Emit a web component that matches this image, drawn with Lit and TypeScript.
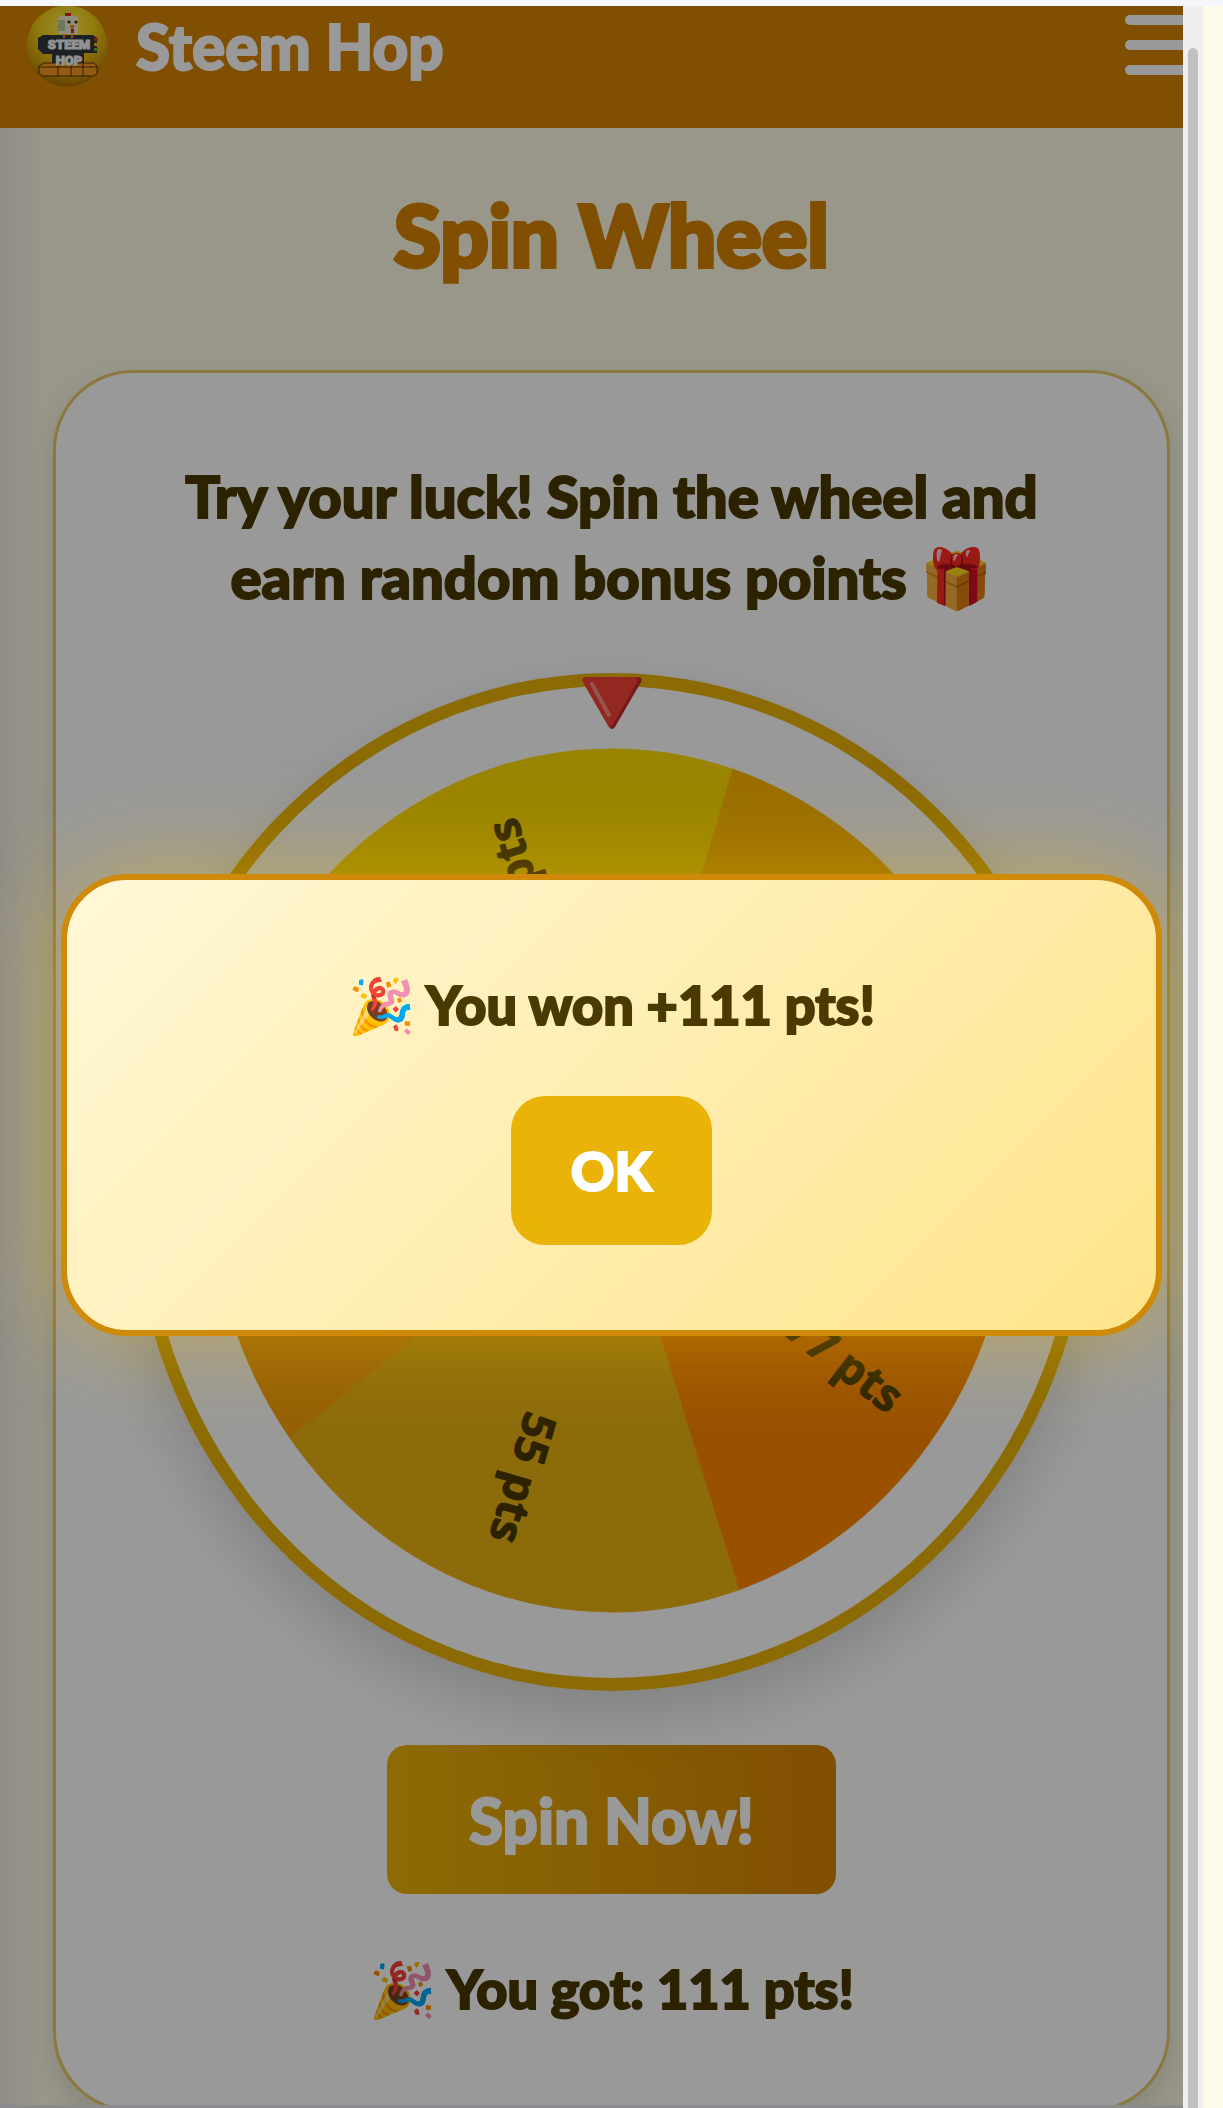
import { LitElement, html, svg, css } from "lit";
import { customElement, property, state } from "lit/decorators.js";

interface Slice {
  color: string;
  label: string;
}

@customElement("hop-logo")
export class HopLogo extends LitElement {
  static styles = css`
    :host {
      display: block;
      width: 82px;
      height: 82px;
    }
    .logo {
      display: block;
      width: 100%;
      height: 100%;
    }
    .word {
      font-family: "Roboto", "Liberation Sans", sans-serif;
      font-weight: 900;
      font-size: 13px;
      fill: #f4f4f4;
      stroke: #f4f4f4;
      stroke-width: 1px;
      text-anchor: middle;
    }
  `;

  render() {
    return html`
      <svg class="logo" viewBox="0 0 82 82" role="img" aria-label="Steem Hop logo">
        <defs>
          <radialGradient id="ball" cx="50%" cy="28%" r="72%">
            <stop offset="0" stop-color="#ffee58" />
            <stop offset="0.45" stop-color="#f2cf18" />
            <stop offset="0.8" stop-color="#cf9a0a" />
            <stop offset="1" stop-color="#a86c04" />
          </radialGradient>
        </defs>
        <circle cx="41" cy="41" r="40.5" fill="url(#ball)" />
        <path d="M12 33l5-3h50l4 3v15H58v15H26V49H17l-5-5z" fill="#33383c" />
        <path d="M68 33h4v3h-4z" fill="#d33a20" />
        <path d="M68 38h4v3h-4z" fill="#e8c31c" />
        <path d="M68 43h4v3h-4z" fill="#5fae3a" />
        <path d="M39 8h6v5h-6z" fill="#d9271c" />
        <path d="M32 13l3-2h15l2 2v16H34l-2-2z" fill="#f3ead2" />
        <path d="M32 15h7v11h-7z" fill="#b9c79a" />
        <circle cx="43" cy="17" r="1.6" fill="#2b2b22" />
        <circle cx="50" cy="17" r="1.6" fill="#2b2b22" />
        <path d="M44 20h5l-2 4h-2z" fill="#f08a1c" />
        <path d="M45 24h3v4h-3z" fill="#d9271c" />
        <path d="M38 29v4M46 29v4" stroke="#e88a18" stroke-width="2" />
        <path d="M13 61l5-3h50l3 3v8l-4 2H17l-4-3z" fill="#f39a1e" stroke="#5e2e06" />
        <path d="M13 62h58M32 58v13M45 58v13M57 58v13" stroke="#5e2e06" stroke-width="1" />
        <text class="word" x="43" y="44">STEEM</text>
        <text class="word" x="43" y="60">HOP</text>
      </svg>
    `;
  }
}

@customElement("prize-wheel")
export class PrizeWheel extends LitElement {
  @property({ attribute: false }) slices: Slice[] = [];
  @property({ type: Number }) turn = 0;

  static styles = css`
    :host {
      display: block;
      position: relative;
    }
    .ring {
      box-sizing: border-box;
      border: 13px solid #eab308;
      border-radius: 50%;
      box-shadow: 0 26px 60px rgba(0, 0, 0, 0.15);
    }
    .face {
      display: block;
      width: 100%;
      height: auto;
    }
    .label {
      font-family: "Open Sans", "Noto Sans", sans-serif;
      font-weight: 700;
      font-size: 45px;
      fill: #4b3a00;
      stroke: #4b3a00;
      stroke-width: 1px;
      stroke-linejoin: round;
      text-anchor: end;
      dominant-baseline: central;
    }
    .pointer {
      position: absolute;
      top: 4px;
      left: 50%;
      width: 60px;
      height: 53px;
      margin-left: -30px;
    }
  `;

  private point(deg: number, k = 1) {
    const a = (deg * Math.PI) / 180;
    return { x: 466 + 400 * k * Math.cos(a), y: 494 + 431 * k * Math.sin(a) };
  }

  private slice(s: Slice, i: number) {
    const step = 360 / this.slices.length;
    const from = this.turn + i * step;
    const a = this.point(from);
    const b = this.point(from + step);
    return svg`<path
      d="M466 494L${a.x} ${a.y}A400 431 0 0 1 ${b.x} ${b.y}Z"
      fill=${s.color} stroke=${s.color} stroke-width="1"></path>`;
  }

  private label(s: Slice, i: number) {
    const step = 360 / this.slices.length;
    const end = this.point(this.turn + (i + 0.5) * step, 0.88);
    const angle = (Math.atan2(end.y - 494, end.x - 466) * 180) / Math.PI;
    return svg`<text class="label" transform="translate(${end.x} ${end.y}) rotate(${angle})">${s.label}</text>`;
  }

  render() {
    return html`
      <div class="ring">
        <svg class="face" viewBox="0 0 932 991" role="img" aria-label="Prize wheel">
          ${this.slices.map((s, i) => this.slice(s, i))}
          ${this.slices.filter((s) => s.label).map((s) => this.label(s, this.slices.indexOf(s)))}
        </svg>
      </div>
      <svg class="pointer" viewBox="0 0 60 53" aria-hidden="true">
        <path d="M4 0H56Q61 1 59 5L33 50Q30 54 27 50L1 5Q-1 1 4 0Z" fill="#c62828" />
        <path d="M4 0H54L56 4L30 49L27 50L1 5Q-1 1 4 0Z" fill="#f44336" />
        <path d="M10 7L27 38" stroke="#ff8a80" stroke-width="4" stroke-linecap="round" />
      </svg>
    `;
  }
}

@customElement("app-root")
export class AppRoot extends LitElement {
  @state() private points = 111;
  @state() private open = true;

  private slices: Slice[] = [
    { color: "#ffb700", label: "" },
    { color: "#ff8800", label: "77 pts" },
    { color: "#eab313", label: "55 pts" },
    { color: "#f9a00a", label: "" },
    { color: "#ffdc00", label: "111 pts" },
  ];

  static styles = css`
    :host {
      display: block;
      position: relative;
      height: 100vh;
      overflow: hidden;
      box-sizing: border-box;
      padding: 6px 0 3px;
      background: #f5f5fc;
      font-family: "Lato", "Noto Sans", "Noto Color Emoji", sans-serif;
      font-weight: 900;
      color: #4b3a00;
      -webkit-text-stroke: 2px;
    }
    .screen {
      position: relative;
      height: 100%;
      overflow: hidden;
      background: #fffbe6;
    }
    .header {
      display: flex;
      justify-content: space-between;
      align-items: flex-start;
      height: 122px;
      padding-left: 26px;
      background: #d58403;
      color: #fff;
    }
    .brand {
      display: flex;
      align-items: center;
      gap: 28px;
      height: 80px;
      font-size: 62px;
      color: #fff;
      text-decoration: none;
    }
    .menu {
      display: grid;
      gap: 15px;
      padding: 9px 22px 0 0;
      border: 0;
      background: none;
    }
    .bar {
      width: 76px;
      height: 10px;
      border-radius: 5px;
      background: #fff;
    }
    .content {
      display: flex;
      flex-direction: column;
      padding: 0 53px;
      background: linear-gradient(90deg, #f0ebe2, #fffbe6 40px);
    }
    .title {
      margin: 0;
      padding: 56px 0 86px;
      font-size: 85px;
      line-height: 100px;
      font-weight: 900;
      text-align: center;
      color: #d58403;
      -webkit-text-stroke: 4px;
    }
    .card {
      display: flex;
      flex-direction: column;
      align-items: center;
      padding: 82px 76px 80px;
      border: 3px solid #e6c868;
      border-radius: 80px;
      background: #fff;
      box-shadow: 0 12px 30px rgba(0, 0, 0, 0.12);
    }
    .lead {
      margin: 0 0 56px;
      font-size: 58px;
      line-height: 81px;
      text-align: center;
      white-space: nowrap;
    }
    .wheel {
      align-self: stretch;
    }
    .spin {
      height: 149px;
      margin-top: 54px;
      padding: 0 82px;
      border: 0;
      border-radius: 20px;
      background: linear-gradient(90deg, #eab308, #d58403);
      font: inherit;
      font-size: 62px;
      color: #fff;
    }
    .result {
      margin: 54px 0 0;
      font-size: 54px;
      line-height: 81px;
    }
    .overlay {
      position: absolute;
      inset: 0;
      display: flex;
      align-items: center;
      justify-content: center;
      padding-top: 98px;
      background: rgba(0, 0, 0, 0.4);
    }
    .modal {
      box-sizing: border-box;
      display: flex;
      flex-direction: column;
      align-items: center;
      gap: 50px;
      width: 90%;
      padding: 84px 64px 85px;
      border: 6px solid #d08a0a;
      border-radius: 66px;
      background: linear-gradient(135deg, #fff8d8, #ffe48a);
      box-shadow: 0 0 100px rgba(255, 200, 0, 0.4);
    }
    .message {
      margin: 0;
      font-size: 54px;
      line-height: 82px;
    }
    .ok {
      height: 149px;
      padding: 0 60px;
      border: 0;
      border-radius: 34px;
      background: #eab308;
      font: inherit;
      font-size: 54px;
      color: #fff;
    }
    .gutter {
      position: absolute;
      top: 6px;
      right: 0;
      bottom: 0;
      display: flex;
      width: 40px;
      background: #fffbeb;
    }
    .track {
      display: flex;
      box-sizing: border-box;
      width: 20px;
      padding: 42px 5px 0;
      background: #efefef;
    }
    .thumb {
      flex: 1;
      border-radius: 5px 5px 0 0;
      background: #c0c0c0;
    }
    .edge {
      position: absolute;
      left: 0;
      right: 40px;
      bottom: 0;
      height: 3px;
      background: #8a8a8f;
    }
  `;

  render() {
    return html`
      <div class="screen">
        <header class="header">
          <a class="brand" href="#"><hop-logo></hop-logo><span>Steem Hop</span></a>
          <button class="menu" aria-label="Menu">
            <span class="bar"></span><span class="bar"></span><span class="bar"></span>
          </button>
        </header>
        <main class="content">
          <h1 class="title">Spin Wheel</h1>
          <section class="card">
            <p class="lead">Try your luck! Spin the wheel and<br />earn random bonus points 🎁</p>
            <prize-wheel class="wheel" .slices=${this.slices} .turn=${-72.5}></prize-wheel>
            <button class="spin" @click=${() => (this.open = true)}>Spin Now!</button>
            <p class="result">🎉 You got: ${this.points} pts!</p>
          </section>
        </main>
        ${this.open
          ? html`<div class="overlay">
              <div class="modal" role="dialog" aria-modal="true" aria-labelledby="won">
                <p class="message" id="won">🎉 You won +${this.points} pts!</p>
                <button class="ok" @click=${() => (this.open = false)}>OK</button>
              </div>
            </div>`
          : null}
      </div>
      <div class="edge"></div>
      <div class="gutter"><div class="track"><div class="thumb"></div></div></div>
    `;
  }
}
